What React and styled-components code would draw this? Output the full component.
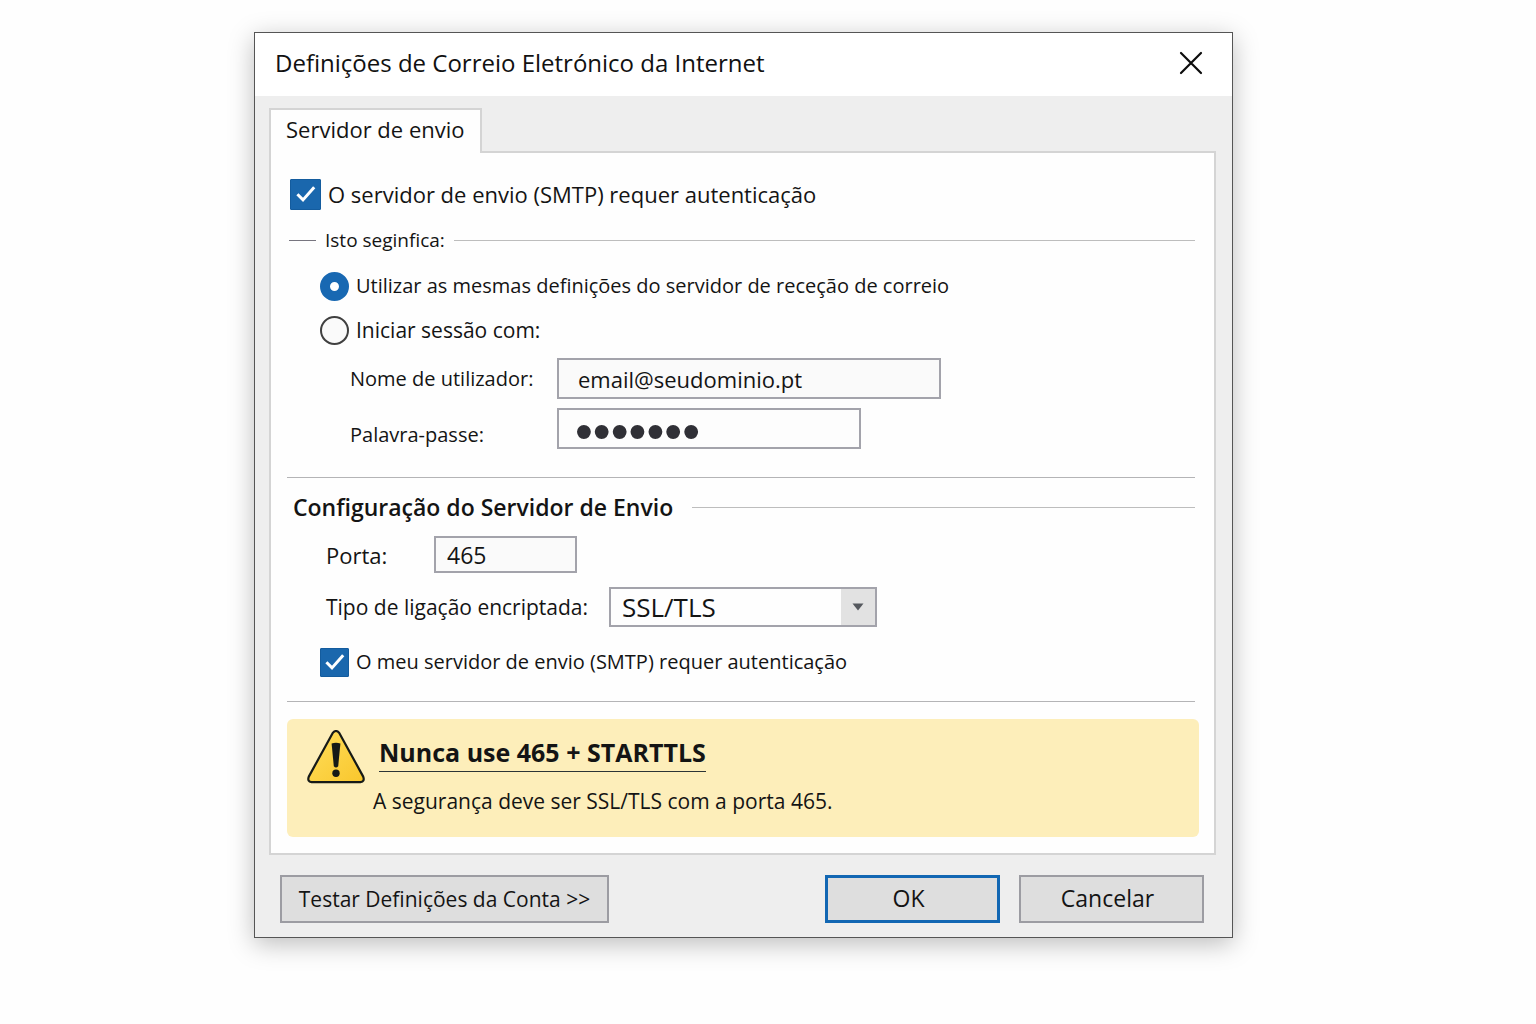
import React, { useState } from 'react';
import styled, { createGlobalStyle } from 'styled-components';

const GlobalStyle = createGlobalStyle`
  *, *::before, *::after { box-sizing: border-box; }
  body {
    margin: 0;
    background: #fefefe;
    color: #141414;
    font-family: "Segoe UI", "Open Sans", "Noto Sans", sans-serif;
    font-size: 20px;
    line-height: 28px;
  }
  input, select, button { font: inherit; color: inherit; margin: 0; }
`;

const Page = styled.main`
  display: flex;
  justify-content: center;
  padding: 32px 49px 48px 0;
`;

const Dialog = styled.section`
  width: 100%;
  max-width: 979px;
  background: #eeeeee;
  border: 1px solid #555555;
  box-shadow: 0 6px 24px rgba(0, 0, 0, 0.26);
`;

const TitleBar = styled.header`
  display: flex;
  align-items: center;
  justify-content: space-between;
  height: 63px;
  padding: 0 21px 4px 20px;
  background: #ffffff;
`;

const Title = styled.h1`
  margin: 0;
  font-size: 24px;
  font-weight: 400;
  line-height: 32px;
  color: #111111;
`;

const CloseButton = styled.button`
  display: grid;
  place-items: center;
  width: 40px;
  height: 40px;
  padding: 0;
  border: 0;
  background: transparent;
`;

const Body = styled.div`
  padding: 12px 16px 14px 14px;
`;

const TabList = styled.div`
  display: flex;
`;

const Tab = styled.button`
  z-index: 1;
  height: 45px;
  margin-bottom: -2px;
  padding: 0 15px 5px;
  border: 2px solid #d4d4d4;
  border-bottom: 0;
  background: #fefefe;
  font-size: 22px;
  line-height: 28px;
`;

const Panel = styled.div`
  padding: 26px 15px 16px 16px;
  border: 2px solid #d4d4d4;
  background: #fefefe;
`;

const Settings = styled.form`
  display: flex;
  flex-direction: column;
  padding-right: 4px;
`;

const Option = styled.label`
  display: flex;
  align-items: center;
  gap: 7px;
  height: 30px;
  margin-top: ${(p) => p.$top}px;
  padding-left: ${(p) => (p.$nested ? 33 : 3)}px;
  font-size: ${(p) => p.$size || 20}px;
  line-height: 28px;
`;

const Mark = styled.span`
  display: grid;
  flex: none;
  place-items: center;

  & > * { grid-area: 1 / 1; }
  & > svg { pointer-events: none; }
`;

const CheckInput = styled.input`
  appearance: none;
  width: ${(p) => p.$size}px;
  height: ${(p) => p.$size}px;
  border: 1px solid #555555;
  border-radius: 1px;
  background: #ffffff;

  &:checked { border-color: #145c9e; background: #1a67ad; }
`;

const RadioInput = styled.input`
  appearance: none;
  width: 29px;
  height: 29px;
  border: 2px solid #404040;
  border-radius: 50%;
  background: #fafafa;

  &:checked { border: 10px solid #1868b2; background: #ffffff; }
`;

const GroupHeading = styled.h2`
  display: flex;
  align-items: center;
  gap: ${(p) => (p.$strong ? 19 : 9)}px;
  height: ${(p) => (p.$strong ? 32 : 28)}px;
  margin: ${(p) => (p.$strong ? 13 : 17)}px 0 ${(p) => (p.$strong ? 0 : 1)}px;
  padding-left: ${(p) => (p.$strong ? 6 : 2)}px;
  font-size: ${(p) => (p.$strong ? 23 : 19)}px;
  font-weight: ${(p) => (p.$strong ? 600 : 400)};
  line-height: 28px;

  &::after {
    content: "";
    flex: 1;
    height: 1px;
    background: #bdbdbd;
  }
`;

const Dash = styled.span`
  width: 27px;
  height: 1px;
  background: #77757f;
`;

const Divider = styled.hr`
  width: 100%;
  height: 1px;
  margin: ${(p) => p.$top}px 0 0;
  border: 0;
  background: #b4b4b6;
`;

const Field = styled.div`
  display: grid;
  grid-template-columns: ${(p) => p.$label}px minmax(0, ${(p) => p.$control}px);
  align-items: ${(p) => p.$align || 'center'};
  margin-top: ${(p) => p.$top}px;
  padding-left: ${(p) => (p.$deep ? 63 : 39)}px;
`;

const FieldLabel = styled.label`
  font-size: ${(p) => p.$size || 20}px;
  white-space: nowrap;
`;

const TextInput = styled.input`
  width: 100%;
  height: ${(p) => (p.$compact ? 37 : 41)}px;
  padding: 0 ${(p) => (p.$compact ? 11 : 19)}px;
  border: 2px solid #a3a3ab;
  border-radius: 0;
  background: #fafafa;
  font-size: ${(p) => (p.$compact ? 23 : 22)}px;
`;

const PasswordInput = styled(TextInput)`
  padding: 6px 16px 0;
  background: #fdfdfd;
  color: #303036;
  font-family: "Liberation Sans", Arial, sans-serif;
  font-size: 51px;
`;

const SelectBox = styled.div`
  display: grid;
  grid-template-columns: minmax(0, 1fr) 34px;
  height: 40px;
  border: 2px solid #a3a3ab;
  background: #fefefe;
`;

const Select = styled.select`
  grid-area: 1 / 1 / 2 / 3;
  appearance: none;
  width: 100%;
  padding: 0 44px 0 11px;
  border: 0;
  border-radius: 0;
  background: transparent;
  font-size: 26px;
  line-height: 36px;
`;

const Arrow = styled.span`
  grid-area: 1 / 2;
  display: grid;
  place-items: center;
  background: #e2e2e2;
  pointer-events: none;
`;

const Alert = styled.aside`
  display: flex;
  gap: 8px;
  min-height: 118px;
  margin-top: 17px;
  padding: 11px 20px;
  border-radius: 6px;
  background: #fdeeba;
`;

const AlertText = styled.div`
  display: flex;
  flex-direction: column;
  align-items: flex-start;
`;

const AlertTitle = styled.strong`
  margin-left: 6px;
  padding: 4px 0 1px;
  border-bottom: 1px solid #2c3436;
  font-size: 25px;
  font-weight: 700;
  line-height: 36px;
`;

const AlertMessage = styled.p`
  margin: 15px 0 0;
  font-size: 21px;
  line-height: 28px;
`;

const Actions = styled.footer`
  display: flex;
  gap: 19px;
  margin-top: 20px;
  padding: 0 12px 0 11px;
`;

const Button = styled.button`
  width: ${(p) => p.$width}px;
  height: 48px;
  margin-right: ${(p) => (p.$start ? 'auto' : '0')};
  padding: ${(p) => (p.$start ? '0' : '0 8px 2px 0')};
  border: ${(p) => (p.$primary ? '3px solid #1267b3' : '2px solid #9c9ca2')};
  background: #dedede;
  font-size: ${(p) => (p.$start ? 21 : 23)}px;
  line-height: 28px;
`;

function Checkbox({ id, size }) {
  const [on, setOn] = useState(true);
  return (
    <Mark>
      <CheckInput id={id} type="checkbox" $size={size} checked={on} onChange={(e) => setOn(e.target.checked)} />
      {on && (
        <svg width="20" height="18" viewBox="0 0 20 18" fill="none" aria-hidden="true">
          <path d="M1.4 9.2 7 14.9 18.2 2.2" stroke="#fff" strokeWidth="3" />
        </svg>
      )}
    </Mark>
  );
}

function WarningIcon() {
  return (
    <svg width="58" height="54" viewBox="0 0 58 54" aria-hidden="true">
      <defs>
        <linearGradient id="amber" x1="0" y1="0" x2="1" y2="1">
          <stop offset="0" stopColor="#ffdf5c" />
          <stop offset="1" stopColor="#f9c62c" />
        </linearGradient>
      </defs>
      <path
        d="M25.6 3.2Q29-1.2 32.4 3.2L56.2 46.6Q58 51.6 53.4 52.2H4.6Q0 51.6 1.8 46.6Z"
        fill="url(#amber)"
        stroke="#161a17"
        strokeWidth="2.2"
        strokeLinejoin="round"
      />
      <path d="M24.6 13.6Q29 12 33.4 13.6L31.2 36.2Q29 38.6 26.8 36.2Z" fill="#161a17" />
      <circle cx="29" cy="43.2" r="3.7" fill="#161a17" />
    </svg>
  );
}

export default function App() {
  const [mode, setMode] = useState('same');
  return (
    <>
      <GlobalStyle />
      <Page>
        <Dialog role="dialog" aria-labelledby="title">
          <TitleBar>
            <Title id="title">Definições de Correio Eletrónico da Internet</Title>
            <CloseButton type="button" aria-label="Fechar">
              <svg width="24" height="24" viewBox="0 0 24 24" aria-hidden="true">
                <path d="M2 2 22 22M22 2 2 22" stroke="#0c0c0c" strokeWidth="2.2" strokeLinecap="round" />
              </svg>
            </CloseButton>
          </TitleBar>

          <Body>
            <TabList role="tablist">
              <Tab type="button" role="tab" aria-selected="true">Servidor de envio</Tab>
            </TabList>

            <Panel role="tabpanel">
              <Settings id="settings" onSubmit={(e) => e.preventDefault()}>
                <Option $top={0} $size={22} htmlFor="auth">
                  <Checkbox id="auth" size={31} />
                  O servidor de envio (SMTP) requer autenticação
                </Option>

                <GroupHeading>
                  <Dash />
                  Isto seginfica:
                </GroupHeading>

                <Option $top={16} $nested htmlFor="same">
                  <Mark>
                    <RadioInput id="same" type="radio" name="mode" checked={mode === 'same'} onChange={() => setMode('same')} />
                  </Mark>
                  Utilizar as mesmas definições do servidor de receção de correio
                </Option>
                <Option $top={14} $size={21} $nested htmlFor="login">
                  <Mark>
                    <RadioInput id="login" type="radio" name="mode" checked={mode === 'login'} onChange={() => setMode('login')} />
                  </Mark>
                  Iniciar sessão com:
                </Option>

                <Field $top={13} $label={207} $control={384} $deep>
                  <FieldLabel htmlFor="user">Nome de utilizador:</FieldLabel>
                  <TextInput id="user" type="text" defaultValue="email@seudominio.pt" />
                </Field>
                <Field $top={9} $label={207} $control={304} $align="end" $deep>
                  <FieldLabel htmlFor="pass">Palavra-passe:</FieldLabel>
                  <PasswordInput id="pass" type="password" defaultValue="segredo" />
                </Field>

                <Divider $top={28} />

                <GroupHeading $strong>Configuração do Servidor de Envio</GroupHeading>

                <Field $top={13} $label={108} $control={143}>
                  <FieldLabel $size={22} htmlFor="port">Porta:</FieldLabel>
                  <TextInput id="port" type="text" inputMode="numeric" defaultValue="465" $compact />
                </Field>
                <Field $top={14} $label={283} $control={268}>
                  <FieldLabel $size={21} htmlFor="crypt">Tipo de ligação encriptada:</FieldLabel>
                  <SelectBox>
                    <Select id="crypt" defaultValue="SSL/TLS">
                      <option>SSL/TLS</option>
                    </Select>
                    <Arrow>
                      <svg width="12" height="8" viewBox="0 0 12 8" aria-hidden="true">
                        <path d="M0.5 0.5H11.5L6 7.5Z" fill="#55585e" />
                      </svg>
                    </Arrow>
                  </SelectBox>
                </Field>

                <Option $top={20} $nested htmlFor="smtp">
                  <Checkbox id="smtp" size={29} />
                  O meu servidor de envio (SMTP) requer autenticação
                </Option>

                <Divider $top={24} />
              </Settings>

              <Alert>
                <WarningIcon />
                <AlertText>
                  <AlertTitle>Nunca use 465 + STARTTLS</AlertTitle>
                  <AlertMessage>A segurança deve ser SSL/TLS com a porta 465.</AlertMessage>
                </AlertText>
              </Alert>
            </Panel>

            <Actions>
              <Button type="button" $width={329} $start>Testar Definições da Conta &gt;&gt;</Button>
              <Button type="submit" form="settings" $width={175} $primary>OK</Button>
              <Button type="button" $width={185}>Cancelar</Button>
            </Actions>
          </Body>
        </Dialog>
      </Page>
    </>
  );
}
